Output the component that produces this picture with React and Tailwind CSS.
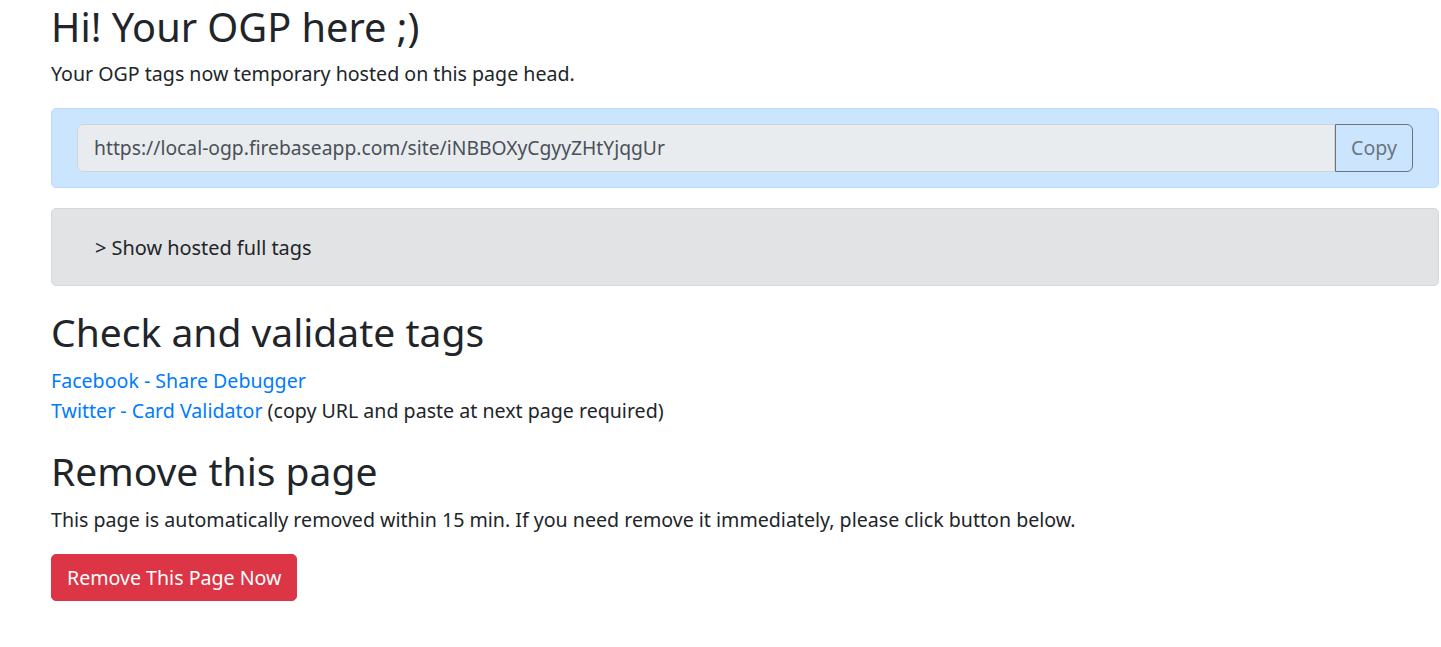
export default function App() {
  const url = "https://local-ogp.firebaseapp.com/site/iNBBOXyCgyyZHtYjqgUr";

  return (
    <div className="min-h-screen bg-white pl-[51px] pr-[2px] font-['Noto_Sans',sans-serif] text-[19.6px] leading-[30px] text-[#212529]">
      {/* Header */}
      <h1 className="pt-[3px] mb-[8px] text-[39.7px] leading-[48px] font-normal">Hi! Your OGP here ;)</h1>
      <p className="mb-[19px]">Your OGP tags now temporary hosted on this page head.</p>

      {/* URL box */}
      <div className="mb-[20px] rounded-[5px] border border-[#b8daff] bg-[#cce5ff] px-[25px] py-[15px]">
        <div className="flex h-[48px]">
          <input
            readOnly
            value={url}
            className="min-w-0 flex-1 rounded-l-[6px] border border-[#ced4da] bg-[#e9ecef] px-[16px] text-[19.3px] text-[#495057] outline-none"
          />
          <button className="w-[78px] rounded-r-[6px] border border-[#6c757d] text-[19.6px] text-[#6c757d]">
            Copy
          </button>
        </div>
      </div>

      {/* Full tags */}
      <div className="mb-[22px] rounded-[5px] border border-[#d6d8db] bg-[#e2e3e5] pl-[43px] pt-[24px] pb-[22px]">
        <span className="text-[19.9px]">&gt; Show hosted full tags</span>
      </div>

      {/* Validators */}
      <h2 className="mb-[11px] text-[39px] leading-[47px] font-normal">Check and validate tags</h2>
      <div className="mb-[21px]">
        <div>
          <a href="#" className="text-[#007bff]">Facebook - Share Debugger</a>
        </div>
        <div>
          <a href="#" className="text-[#007bff]">Twitter - Card Validator</a> (copy URL and paste at next page required)
        </div>
      </div>

      {/* Remove */}
      <h3 className="mb-[11px] text-[39px] leading-[47px] font-normal">Remove this page</h3>
      <p className="mb-[19px]">
        This page is automatically removed within 15 min. If you need remove it immediately, please click button below.
      </p>
      <button className="rounded-[5px] border border-[#dc3545] bg-[#dc3545] px-[15px] py-[7.5px] text-white">
        Remove This Page Now
      </button>
    </div>
  );
}
